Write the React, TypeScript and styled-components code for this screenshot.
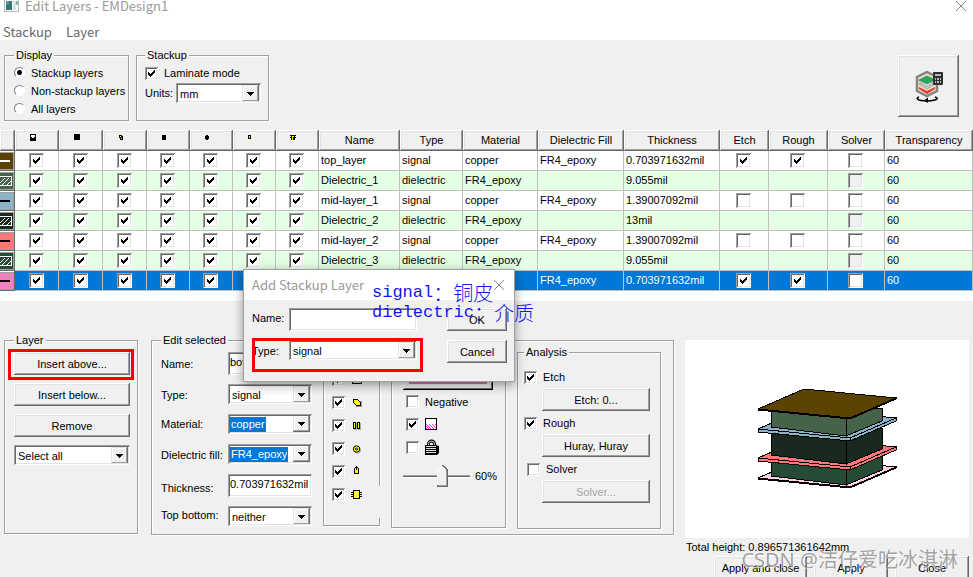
import React from "react";
import styled, { createGlobalStyle, css } from "styled-components";

const svgUrl = (body: string, w: number, h: number) =>
  `url("data:image/svg+xml,${encodeURIComponent(
    `<svg xmlns='http://www.w3.org/2000/svg' width='${w}' height='${h}' shape-rendering='crispEdges'>${body}</svg>`
  )}")`;

const tick = svgUrl("<path d='M0 2v3h1v1h1v1h1v-1h1v-1h1v-1h1v-1h1v-3h-1v1h-1v1h-1v1h-1v1h-1v-1h-1v-1z'/>", 7, 7);
const arrow = svgUrl(
  "<path fill='#696969' d='M0 0h17v17h-17z'/><path fill='#e3e3e3' d='M0 0h16v16h-16z'/><path fill='#a0a0a0' d='M1 1h15v15h-15z'/><path fill='#fff' d='M1 1h14v14h-14z'/><path fill='#f0f0f0' d='M2 2h13v13h-13z'/><path d='M5 7h7v1h-1v1h-1v1h-1v1h-1v-1h-1v-1h-1v-1h-1z'/>",
  17,
  17
);
const thumb = svgUrl(
  "<path fill='#696969' d='M5 0h1l5 5v17h-11v-17z'/><path fill='#f0f0f0' d='M0 0h5l-5 5zM6 0h5v5z'/><path fill='#fff' d='M5 1l4 4v15h-9v-15z'/><path fill='#a0a0a0' d='M5 2l5 4v15h-9v-15z'/><path fill='#f0f0f0' d='M5 2l4 4v14h-8v-14z'/>",
  11,
  22
);

const sunken = css`
  box-shadow: inset 1px 1px #a0a0a0, inset -1px -1px #fff, inset 2px 2px #696969, inset -2px -2px #e3e3e3;
`;
const raised = css`
  box-shadow: inset -1px -1px #696969, inset 1px 1px #fff, inset -2px -2px #a0a0a0, inset 2px 2px #e3e3e3;
`;

const Global = createGlobalStyle`
  * { box-sizing: border-box; }
  body { margin: 0; background: #f0f0f0; }
  body, button, input, select, table { font: 11px/14px "Liberation Sans", Arial, sans-serif; color: #000; }
`;

const Window = styled.main`
  position: relative;
  height: 100vh;
  overflow: hidden;
  background: #f0f0f0;
`;
const TitleBar = styled.header`
  display: flex;
  justify-content: space-between;
  align-items: center;
  height: 16px;
  padding: 0 6px 4px 4px;
  background: #fff;
`;
const Title = styled.h1`
  display: flex;
  align-items: center;
  gap: 6px;
  margin: 0;
  color: #999;
  font: 400 13px/14px "Noto Sans CJK SC", sans-serif;
`;
const IconButton = styled.button`
  display: flex;
  padding: 0;
  border: 0;
  background: none;
`;
const MenuBar = styled.nav`
  display: flex;
  align-items: flex-end;
  gap: 14px;
  height: 24px;
  padding: 0 3px;
  background: #fff;
`;
const MenuItem = styled.button`
  padding: 0;
  border: 0;
  background: none;
  color: #666;
  font: 13px/16px "Noto Sans CJK SC", sans-serif;
`;

const Toolbar = styled.section`
  display: flex;
  align-items: flex-start;
  gap: 7px;
  height: 90px;
  padding: 9px 14px 0 4px;
`;
const Group = styled.fieldset`
  min-width: 0;
  margin: 0;
  padding: 3px 6px;
  border: 1px solid #a0a0a0;
  box-shadow: 1px 1px #fff, inset 1px 1px #fff;
`;
const DisplayGroup = styled(Group)`
  width: 125px;
  height: 72px;
  padding-left: 9px;
`;
const StackupGroup = styled(Group)`
  width: 133px;
  height: 72px;
  padding-left: 8px;
`;
const Legend = styled.legend`
  height: 12px;
  padding: 0 2px;
  background: #f0f0f0;
  line-height: 12px;
`;
const Option = styled.label<{ $indent?: boolean }>`
  display: flex;
  align-items: center;
  gap: 6px;
  height: 18px;
  white-space: nowrap;
  padding-left: ${(p) => (p.$indent ? 3 : 0)}px;
`;
const Radio = styled.input`
  appearance: none;
  flex: none;
  width: 11px;
  height: 11px;
  margin: 0 0 2px;
  border: 1px solid;
  border-color: #808080 #fff #fff #808080;
  border-radius: 50%;
  background: #fff;
  &:checked {
    background: radial-gradient(circle, #000 2px, #fff 3px);
  }
`;
const Check = styled.input<{ $cell?: boolean }>`
  appearance: none;
  display: block;
  flex: none;
  width: ${(p) => (p.$cell ? 15 : 13)}px;
  height: ${(p) => (p.$cell ? 15 : 13)}px;
  margin: 0;
  background: #fff;
  ${sunken}
  &:checked {
    background: #fff ${tick} center no-repeat;
  }
  &:disabled {
    background-color: #f0f0f0;
  }
`;
const UnitsRow = styled.div`
  display: grid;
  grid-template-columns: 31px 85px;
  align-items: center;
  height: 21px;
`;
const Select = styled.select`
  appearance: none;
  width: 100%;
  height: 20px;
  padding: 2px 20px 0 4px;
  border: 0;
  border-radius: 0;
  background: #fff ${arrow} right 2px top 2px no-repeat;
  ${sunken}
`;
const TextBox = styled.input`
  width: 100%;
  min-width: 0;
  height: 23px;
  padding: 0 2px 4px;
  border: 0;
  background: #fff;
  ${sunken}
`;
const Button = styled.button`
  height: 23px;
  padding: 0 6px;
  border: 0;
  background: #f0f0f0;
  white-space: nowrap;
  ${raised}
  &:disabled {
    color: #a0a0a0;
    text-shadow: 1px 1px #fff;
  }
`;
const ToolButton = styled(Button)`
  display: grid;
  place-items: center;
  width: 61px;
  height: 62px;
  margin: 6px 0 0 auto;
`;

const TableArea = styled.section`
  padding-bottom: 10px;
  background: #fff;
`;
const LayerTable = styled.table`
  width: 100%;
  table-layout: fixed;
  border-collapse: separate;
  border-spacing: 0;
`;
const Th = styled.th<{ $icon?: boolean }>`
  height: 21px;
  padding: ${(p) => (p.$icon ? "0 0 6px 14px" : "0 0 2px")};
  background: #f0f0f0;
  font-weight: 400;
  text-align: ${(p) => (p.$icon ? "left" : "center")};
  white-space: nowrap;
  ${raised}
  svg {
    display: block;
  }
`;
const Tr = styled.tr<{ $kind: string }>`
  background: ${(p) => (p.$kind === "selected" ? "#0078d7" : p.$kind === "dielectric" ? "#e4ffe4" : "#fff")};
  color: ${(p) => (p.$kind === "selected" ? "#fff" : "#000")};
`;
const Td = styled.td`
  height: 20px;
  padding: 0 0 1px 2px;
  border-right: 1px solid #c0c0c0;
  border-bottom: 1px solid #c0c0c0;
  white-space: nowrap;
`;
const CheckTd = styled(Td)`
  padding: 0 1px 0 0;
  input {
    margin: 0 auto;
  }
`;
const SwatchTd = styled(Td)`
  padding: 0;
  border: 0;
  svg {
    display: block;
  }
`;

const Lower = styled.section`
  display: grid;
  grid-template-columns: 136px 523px minmax(0, 1fr);
  column-gap: 11px;
  align-items: start;
  margin-top: 33px;
  padding: 0 4px;
`;
const LayerGroup = styled(Group)`
  width: 134px;
  height: 200px;
  padding: 6px 7px 0 9px;
`;
const ButtonStack = styled.div`
  display: grid;
  gap: 8px;
`;
const Marked = styled.div`
  position: relative;
  display: grid;
`;
const RedMark = styled.span`
  position: absolute;
  inset: -3px -4px -5px -6px;
  border: 3px solid #f00;
  pointer-events: none;
`;
const EditGroup = styled(Group)`
  height: 201px;
  padding: 0 9px;
`;
const EditBody = styled.div`
  display: flex;
  gap: 11px;
`;
const Fields = styled.div`
  display: grid;
  grid-template-columns: 67px 84px;
  grid-template-rows: 32px 30px 30px 30px 32px 20px;
  padding-top: 6px;
`;
const FieldLabel = styled.label<{ $line?: number }>`
  line-height: ${(p) => p.$line ?? 22}px;
  white-space: nowrap;
`;
const Combo = styled.div`
  display: flex;
  align-items: center;
  justify-content: space-between;
  height: 20px;
  padding: 2px;
  background: #fff;
  ${sunken}
`;
const ComboInput = styled.input`
  field-sizing: content;
  min-width: 0;
  height: 15px;
  padding: 0 1px;
  border: 0;
  background: #0078d7;
  color: #fff;
`;
const ComboArrow = styled.button`
  flex: none;
  width: 17px;
  height: 16px;
  padding: 0;
  border: 0;
  background: ${arrow} bottom no-repeat;
`;
const Panel = styled.div`
  margin-top: 6px;
  border: 1px solid #a0a0a0;
  box-shadow: 1px 1px #fff, inset 1px 1px #fff;
`;
const ShapesPanel = styled(Panel)`
  position: relative;
  width: 57px;
  height: 174px;
  padding: 15px 0 0 8px;
  &::after {
    content: "";
    position: absolute;
    top: 133px;
    right: -2px;
    width: 3px;
    height: 32px;
    background: #f0f0f0;
  }
`;
const ShapeRow = styled.label`
  display: grid;
  grid-template-columns: 13px 12px;
  column-gap: 6px;
  align-items: center;
  height: 23px;
`;
const LookPanel = styled(Panel)`
  width: 115px;
  height: 176px;
  padding: 8px 10px 0 11px;
`;
const ColorButton = styled.button`
  display: block;
  width: 90px;
  height: 29px;
  padding: 6px;
  border: 0;
  background: #f0f0f0;
  box-shadow: inset -1px -1px #000, inset 1px 1px #fff, inset -2px -2px #696969;
  span {
    display: block;
    height: 16px;
    background: #d673ac;
  }
`;
const LookRow = styled(Option)`
  height: 23px;
  padding-left: 3px;
`;
const SliderRow = styled.label`
  display: flex;
  align-items: center;
  gap: 5px;
  padding-top: 6px;
`;
const Slider = styled.input`
  appearance: none;
  width: 67px;
  height: 22px;
  margin: 0;
  background: linear-gradient(#a0a0a0 1px, #696969 1px 2px, #fff 2px) 0 10px / 100% 3px no-repeat;
  &::-webkit-slider-thumb {
    appearance: none;
    width: 11px;
    height: 22px;
    background: ${thumb} no-repeat;
  }
`;
const AnalysisGroup = styled(Group)`
  width: 144px;
  height: 183px;
  padding: 10px 10px 0 6px;
`;
const AnalysisItem = styled.div`
  display: grid;
  grid-template-rows: 20px 23px;
  margin-bottom: 3px;
  button {
    margin-left: 18px;
  }
`;
const Side = styled.div`
  padding-top: 6px;
`;
const Preview = styled.div`
  display: grid;
  place-items: center;
  height: 198px;
  background: #fff;
`;
const Total = styled.div`
  padding-left: 1px;
  line-height: 18px;
`;
const Footer = styled.footer`
  display: flex;
  justify-content: flex-end;
  gap: 7px;
`;
const FooterButton = styled(Button)<{ $wide?: boolean }>`
  width: ${(p) => (p.$wide ? 93 : 74)}px;
`;

const Dialog = styled.section`
  position: absolute;
  left: 243px;
  top: 269px;
  width: 272px;
  border: 1px solid #a0a0a0;
  background: #f0f0f0;
  box-shadow: 0 3px 10px rgba(0, 0, 0, 0.4);
`;
const DialogTitle = styled(TitleBar)`
  height: 30px;
  padding: 0 9px 0 8px;
`;
const DialogForm = styled.form`
  display: grid;
  grid-template-columns: 165px 60px;
  justify-content: space-between;
  padding: 8px 7px 18px 8px;
`;
const DialogRows = styled.div`
  display: grid;
  gap: 9px;
`;
const DialogRow = styled.div`
  position: relative;
  display: grid;
  grid-template-columns: 37px 128px;
  height: 23px;
`;
const DialogMark = styled(RedMark)`
  inset: -2px -6px -9px 0;
`;
const Note = styled.div`
  position: absolute;
  left: 372px;
  top: 283px;
  color: #1414f0;
  font: 300 20px/20px "Noto Sans CJK SC", sans-serif;
  white-space: nowrap;
  pointer-events: none;
`;
const NoteLine = styled.p`
  display: flex;
  height: 20px;
  margin: 0;
`;
const Mono = styled.span`
  font: 17px/20px "Liberation Mono", monospace;
`;
const Watermark = styled.div`
  position: absolute;
  right: 15px;
  top: 547px;
  color: rgba(110, 110, 110, 0.62);
  font: 20px/26px "Noto Sans", "Noto Sans CJK SC", sans-serif;
  text-shadow: 1px 1px rgba(255, 255, 255, 0.6);
  white-space: nowrap;
  pointer-events: none;
`;

const Cross = () => (
  <svg width="12" height="12" viewBox="0 0 12 12" fill="none" stroke="#888">
    <path d="M1 1l10 10M11 1L1 11" />
  </svg>
);

const AppIcon = () => (
  <svg width="15" height="12" viewBox="0 0 15 12" shapeRendering="crispEdges">
    <path fill="#b5bcc0" d="M0 0h15v12H0z" />
    <path fill="#fff" d="M1 0h13v11H1z" />
    <path fill="#347a68" d="M2 1h6v9H2z" />
    <path fill="#5a93ae" d="M2 1h3v4H2z" />
    <path fill="#d4e4e8" d="M9 1h3v9H9z" />
    <path fill="#87b7a4" d="M12 1h2v4h-2z" />
  </svg>
);

const headIcons = [
  <><path d="M1 0h6v7H1z" /><path fill="#fff" d="M2 1h4v2H5v1H3V3H2z" /></>,
  <path d="M1 0h6v6H1z" />,
  <><path d="M2 1h3v1h1v4H3V4H2z" /><path fill="#ff0" d="M3 2h1v1H3zM4 4h1v1H4z" /></>,
  <path d="M1 1h4v5H1z" />,
  <path d="M2 1h2v1h1v3H4v1H2V5H1V2h1z" />,
  <><path d="M1 1h3v4H1z" /><path fill="#ff0" d="M2 2h1v2H2z" /></>,
  <><path d="M0 1h6v1H0zM1 2h4v4H1zM0 3h6v1H0z" /><path fill="#ff0" d="M2 2h2v1H3v3H2z" /></>,
];

const HeadIcon = ({ n }: { n: number }) => (
  <svg width="8" height="8" shapeRendering="crispEdges">
    {headIcons[n]}
  </svg>
);

const Swatch = ({ color, line }: { color: string; line?: string }) => (
  <svg width="15" height="20" shapeRendering="crispEdges">
    <path fill="#696969" d="M0 0h15v20H0z" />
    <path fill="#a0a0a0" d="M0 0h14v19H0z" />
    <path fill="#fff" d="M0 0h14v1H0z" />
    <path fill={color} d="M0 2h13v16H0z" />
    {line ? (
      <path fill={line} d="M0 9h10v2H0z" />
    ) : (
      <g fill="none" stroke="#fff">
        <path d="M0 5.500h11.500v9H0" />
        <path d="M0 12l5-5M2 14l7-7M7 14l4-4" />
      </g>
    )}
  </svg>
);

const shapeIcons = [
  <><path d="M1 1h10v9H1z" /><path fill="#ddd" d="M2 2h8v7H2z" /><path d="M3 6h1v2H3zM5 6h1v2H5zM7 6h1v2H7z" /></>,
  <><path fill="#999" d="M4 4h7v6H5z" /><path fill="#ff0" stroke="#000" d="M2.500 2.500h4l3 3v3h-4l-3-3z" /></>,
  <><path fill="#aaa" d="M3 3h3v7H3zM7 3h3v7H7z" /><path fill="#ff0" stroke="#000" d="M2.500 2.500h2v6h-2zM6.500 2.500h2v6h-2z" /></>,
  <><circle cx="6.500" cy="7" r="3.500" fill="#aaa" /><circle cx="5.500" cy="6" r="3.200" fill="#ff0" stroke="#000" /><circle cx="5.500" cy="6" r="1" fill="#fff" stroke="#000" /></>,
  <><path fill="#ff0" stroke="#000" d="M3.500 7.500v-5l1-1h2l1 1v5z" /><path d="M5 0h1v4H5z" /></>,
  <><path d="M0 3h11v1H0zM0 5h11v1H0zM0 7h11v1H0z" /><path fill="#ff0" stroke="#000" d="M2.500 1.500h6v8h-6z" /><path fill="#fff" d="M4 5h1v1H4zM6 3h1v1H6zM6 7h1v1H6z" /></>,
];

const Shape = ({ n }: { n: number }) => (
  <svg width="12" height="12" viewBox="0 0 12 12" shapeRendering={n === 3 ? "auto" : "crispEdges"}>
    {shapeIcons[n]}
  </svg>
);

const TransparentIcon = () => (
  <svg width="13" height="13" shapeRendering="crispEdges">
    <path fill="#fff" stroke="#000" d="M.5.5h11v11H.5z" />
    <path
      fill="#ff30e0"
      d="M1 6h1v1H1zM4 6h1v1H4zM7 6h1v1H7zM10 6h1v1h-1zM2 7h1v1H2zM5 7h1v1H5zM8 7h1v1H8zM1 8h1v1H1zM3 8h1v1H3zM6 8h1v1H6zM9 8h1v1H9zM2 9h1v1H2zM4 9h1v1H4zM7 9h1v1H7zM10 9h1v1h-1zM1 10h1v1H1zM3 10h1v1H3zM5 10h1v1H5zM8 10h1v1H8z"
    />
  </svg>
);

const LockIcon = () => (
  <svg width="14" height="17" viewBox="0 0 14 17">
    <path fill="none" stroke="#000" strokeWidth="3" d="M3.500 8V5a3 3 0 0 1 6 0v3" />
    <path fill="none" stroke="#ccc" d="M3.500 8V5a3 3 0 0 1 6 0v3" />
    <path d="M0 6h11l3 1v7l-2 2H0z" />
    <path stroke="#ddd" d="M1 7.500h10M1 9.500h10M1 11.500h10M1 13.500h10" />
  </svg>
);

const StackCalcIcon = () => (
  <svg width="30" height="34" viewBox="0 0 30 34">
    <path fill="#eadfc0" stroke="#858585" strokeWidth="2.500" d="M13 3l10 5v14l-10 5-10-5V8z" />
    <path fill="#e1372f" d="M5 18l8 4 8-4v2l-8 5-8-5z" />
    <path fill="#c8c8c8" stroke="#888" strokeWidth=".6" d="M5 15l8-3 8 3-8 5z" />
    <path fill="#f2f2f2" stroke="#999" strokeWidth=".6" d="M5 12l8-3 8 3-8 5z" />
    <path fill="#28a866" stroke="#187a48" strokeWidth=".6" d="M5 11l8-4 8 4-8 4z" />
    <rect x="19" y="3" width="10" height="13" rx="1" fill="#303030" />
    <path fill="#b8b8b8" d="M21 5h6v2h-6zM21 9h1v2h-1zM23 9h2v2h-2zM26 9h1v2h-1zM21 12h1v2h-1zM23 12h2v2h-2zM26 12h1v2h-1z" />
    <path fill="none" stroke="#000" strokeWidth="1.600" d="M5 28c-3 1-2 3 2 3.500 4 .6 10 .4 14-.5 3-1 3-2 0-3" />
    <path d="M14 28.500l-4 3 4 2.500z" />
  </svg>
);

const Plate = ({ y, t, fill }: { y: number; t: number; fill: string }) => (
  <g fill={fill} transform={`translate(0 ${y})`}>
    <path d={`M73 20L165 29L211 9v${t}L165 ${29 + t}L73 ${20 + t}z`} />
    <path d="M73 20L119 0L211 9L165 29z" />
    <path d={`M165 29v${t}`} />
  </g>
);

const Block = ({ top, bottom, fill }: { top: number; bottom: number; fill: string }) => (
  <g fill={fill}>
    <path d={`M86 ${top}V${bottom}L161 ${bottom + 9}V${top}z`} />
    <path d={`M161 ${top}V${bottom + 9}L197 ${bottom - 6}V${top}z`} />
  </g>
);

const StackDrawing = () => (
  <svg width="140" height="104" viewBox="72 47 140 104" stroke="#000" shapeRendering="crispEdges">
    <Plate y={118} t={1} fill="#ffd0e8" />
    <Block top={116} bottom={136} fill="#264a33" />
    <Plate y={98} t={3} fill="#ff7777" />
    <Block top={88} bottom={115} fill="#1a2920" />
    <Plate y={69} t={3} fill="#8cb4c8" />
    <Block top={68} bottom={87} fill="#466249" />
    <Plate y={49} t={1} fill="#5c4300" />
  </svg>
);

type Layer = {
  name: string;
  type: string;
  thickness: string;
  etched?: boolean;
  color: string;
  line?: string;
  selected?: boolean;
};

const layers: Layer[] = [
  { name: "top_layer", type: "signal", thickness: "0.703971632mil", etched: true, color: "#5c4300", line: "#fff" },
  { name: "Dielectric_1", type: "dielectric", thickness: "9.055mil", color: "#466249" },
  { name: "mid-layer_1", type: "signal", thickness: "1.39007092mil", color: "#8cb4c8", line: "#000" },
  { name: "Dielectric_2", type: "dielectric", thickness: "13mil", color: "#1a2920" },
  { name: "mid-layer_2", type: "signal", thickness: "1.39007092mil", color: "#ff7777", line: "#000" },
  { name: "Dielectric_3", type: "dielectric", thickness: "9.055mil", color: "#264a33" },
  { name: "bottom_layer", type: "signal", thickness: "0.703971632mil", etched: true, color: "#f57fc0", line: "#000", selected: true },
];

const columnWidths = [15, 44, 44, 44, 43, 43, 43, 43, 81, 63, 75, 86, 96, 49, 59, 57];
const headings = ["Name", "Type", "Material", "Dielectric Fill", "Thickness", "Etch", "Rough", "Solver", "Transparency"];
const shapes = ["Boards", "Polygons", "Paths", "Vias", "Pins", "Components"];

const LayerRow = ({ layer }: { layer: Layer }) => {
  const signal = layer.type === "signal";
  return (
    <Tr $kind={layer.selected ? "selected" : layer.type}>
      <SwatchTd>
        <Swatch color={layer.color} line={layer.line} />
      </SwatchTd>
      {headIcons.map((_, i) => (
        <CheckTd key={i}>
          <Check $cell type="checkbox" defaultChecked aria-label={`${layer.name} visibility ${i + 1}`} />
        </CheckTd>
      ))}
      <Td>{layer.name}</Td>
      <Td>{layer.type}</Td>
      <Td>{signal ? "copper" : "FR4_epoxy"}</Td>
      <Td>{signal ? "FR4_epoxy" : ""}</Td>
      <Td>{layer.thickness}</Td>
      {["etch", "rough"].map((k) => (
        <CheckTd key={k}>
          {signal && <Check $cell type="checkbox" defaultChecked={layer.etched} aria-label={`${layer.name} ${k}`} />}
        </CheckTd>
      ))}
      <CheckTd>
        <Check $cell type="checkbox" disabled={!signal} aria-label={`${layer.name} solver`} />
      </CheckTd>
      <Td>60</Td>
    </Tr>
  );
};

export default function App() {
  return (
    <Window>
      <Global />
      <TitleBar>
        <Title>
          <AppIcon />
          Edit Layers - EMDesign1
        </Title>
        <IconButton aria-label="Close window">
          <Cross />
        </IconButton>
      </TitleBar>
      <MenuBar>
        <MenuItem>Stackup</MenuItem>
        <MenuItem>Layer</MenuItem>
      </MenuBar>

      <Toolbar>
        <DisplayGroup>
          <Legend>Display</Legend>
          {["Stackup layers", "Non-stackup layers", "All layers"].map((t, i) => (
            <Option key={t}>
              <Radio type="radio" name="display" defaultChecked={i === 0} />
              {t}
            </Option>
          ))}
        </DisplayGroup>
        <StackupGroup>
          <Legend>Stackup</Legend>
          <Option>
            <Check type="checkbox" defaultChecked />
            Laminate mode
          </Option>
          <UnitsRow>
            <label htmlFor="units">Units:</label>
            <Select id="units">
              <option>mm</option>
              <option>mil</option>
            </Select>
          </UnitsRow>
        </StackupGroup>
        <ToolButton aria-label="Stackup calculator">
          <StackCalcIcon />
        </ToolButton>
      </Toolbar>

      <TableArea>
        <LayerTable>
          <colgroup>
            {columnWidths.map((w, i) => (
              <col key={i} width={w} />
            ))}
            <col />
          </colgroup>
          <thead>
            <tr>
              <Th />
              {headIcons.map((_, i) => (
                <Th key={i} $icon>
                  <HeadIcon n={i} />
                </Th>
              ))}
              {headings.map((h) => (
                <Th key={h}>{h}</Th>
              ))}
            </tr>
          </thead>
          <tbody>
            {layers.map((l) => (
              <LayerRow key={l.name} layer={l} />
            ))}
          </tbody>
        </LayerTable>
      </TableArea>

      <Lower>
        <LayerGroup>
          <Legend>Layer</Legend>
          <ButtonStack>
            <Marked>
              <Button>Insert above...</Button>
              <RedMark />
            </Marked>
            <Button>Insert below...</Button>
            <Button>Remove</Button>
            <Select aria-label="Selection">
              <option>Select all</option>
            </Select>
          </ButtonStack>
        </LayerGroup>

        <EditGroup>
          <Legend>Edit selected</Legend>
          <EditBody>
            <Fields>
              <FieldLabel htmlFor="name" $line={24}>Name:</FieldLabel>
              <TextBox id="name" defaultValue="bottom_layer" />
              <FieldLabel htmlFor="type">Type:</FieldLabel>
              <Select id="type">
                <option>signal</option>
                <option>dielectric</option>
              </Select>
              <FieldLabel htmlFor="material" $line={20}>Material:</FieldLabel>
              <Combo>
                <ComboInput id="material" defaultValue="copper" />
                <ComboArrow aria-label="Choose material" />
              </Combo>
              <FieldLabel htmlFor="fill">Dielectric fill:</FieldLabel>
              <Combo>
                <ComboInput id="fill" defaultValue="FR4_epoxy" />
                <ComboArrow aria-label="Choose dielectric fill" />
              </Combo>
              <FieldLabel htmlFor="thickness" $line={28}>Thickness:</FieldLabel>
              <TextBox id="thickness" defaultValue="0.703971632mil" />
              <FieldLabel htmlFor="side" $line={18}>Top bottom:</FieldLabel>
              <Select id="side">
                <option>neither</option>
                <option>top</option>
                <option>bottom</option>
              </Select>
            </Fields>
            <ShapesPanel>
              {shapes.map((s, i) => (
                <ShapeRow key={s}>
                  <Check type="checkbox" defaultChecked aria-label={s} />
                  <Shape n={i} />
                </ShapeRow>
              ))}
            </ShapesPanel>
            <LookPanel>
              <ColorButton aria-label="Layer color">
                <span />
              </ColorButton>
              <LookRow>
                <Check type="checkbox" />
                Negative
              </LookRow>
              <LookRow>
                <Check type="checkbox" defaultChecked aria-label="Pattern" />
                <TransparentIcon />
              </LookRow>
              <LookRow>
                <Check type="checkbox" aria-label="Locked" />
                <LockIcon />
              </LookRow>
              <SliderRow>
                <Slider type="range" defaultValue={60} aria-label="Transparency" />
                60%
              </SliderRow>
            </LookPanel>
            <AnalysisGroup>
              <Legend>Analysis</Legend>
              <AnalysisItem>
                <Option>
                  <Check type="checkbox" defaultChecked />
                  Etch
                </Option>
                <Button>Etch: 0...</Button>
              </AnalysisItem>
              <AnalysisItem>
                <Option>
                  <Check type="checkbox" defaultChecked />
                  Rough
                </Option>
                <Button>Huray, Huray</Button>
              </AnalysisItem>
              <AnalysisItem>
                <Option $indent>
                  <Check type="checkbox" />
                  Solver
                </Option>
                <Button disabled>Solver...</Button>
              </AnalysisItem>
            </AnalysisGroup>
          </EditBody>
        </EditGroup>

        <Side>
          <Preview>
            <StackDrawing />
          </Preview>
          <Total>Total height: 0.896571361642mm</Total>
          <Footer>
            <FooterButton $wide>Apply and close</FooterButton>
            <FooterButton>Apply</FooterButton>
            <FooterButton>Close</FooterButton>
          </Footer>
        </Side>
      </Lower>

      <Dialog role="dialog" aria-label="Add Stackup Layer">
        <DialogTitle>
          <Title as="h2">Add Stackup Layer</Title>
          <IconButton aria-label="Close dialog">
            <Cross />
          </IconButton>
        </DialogTitle>
        <DialogForm onSubmit={(e) => e.preventDefault()}>
          <DialogRows>
            <DialogRow>
              <FieldLabel htmlFor="new-name" $line={20}>Name:</FieldLabel>
              <TextBox id="new-name" />
            </DialogRow>
            <DialogRow>
              <FieldLabel htmlFor="new-type">Type:</FieldLabel>
              <Select id="new-type">
                <option>signal</option>
                <option>dielectric</option>
              </Select>
              <DialogMark />
            </DialogRow>
          </DialogRows>
          <DialogRows>
            <Button type="submit">OK</Button>
            <Button type="button">Cancel</Button>
          </DialogRows>
        </DialogForm>
      </Dialog>

      <Note>
        <NoteLine>
          <Mono>signal</Mono>：铜皮
        </NoteLine>
        <NoteLine>
          <Mono>dielectric</Mono>：介质
        </NoteLine>
      </Note>
      <Watermark>CSDN @洁仔爱吃冰淇淋</Watermark>
    </Window>
  );
}
